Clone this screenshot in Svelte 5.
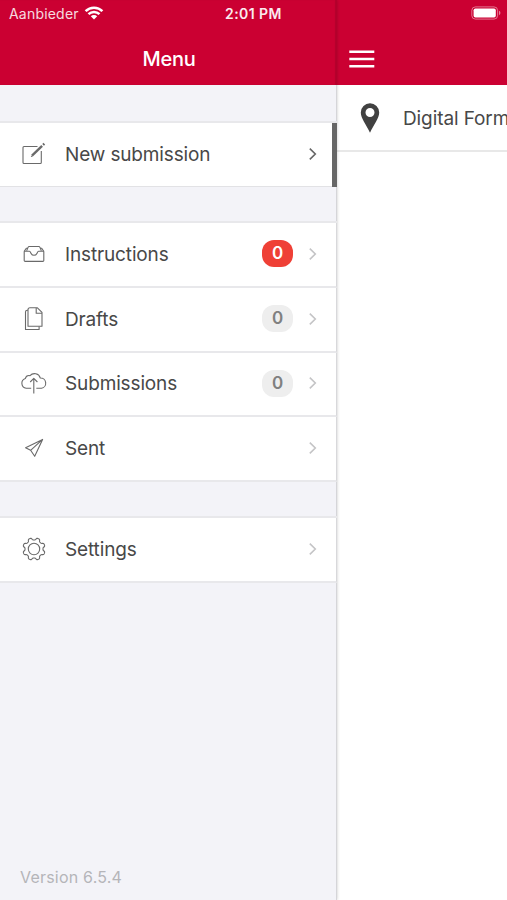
<script lang="ts">
  type Item = { icon: string; label: string; count?: number; alert?: boolean; active?: boolean };

  const groups: Item[][] = [
    [{ icon: 'compose', label: 'New submission', active: true }],
    [
      { icon: 'inbox', label: 'Instructions', count: 0, alert: true },
      { icon: 'drafts', label: 'Drafts', count: 0 },
      { icon: 'cloud', label: 'Submissions', count: 0 },
      { icon: 'plane', label: 'Sent' }
    ],
    [{ icon: 'gear', label: 'Settings' }]
  ];

  // Eight rounded teeth around the centre of a 28px box
  function gearPath() {
    const points: string[] = [];
    for (let i = 0; i < 160; i++) {
      const a = (i / 160) * Math.PI * 2;
      const wave = Math.tanh(-2 * Math.cos(8 * a)) / Math.tanh(2);
      const r = 10.1 + 1.1 * wave;
      points.push(`${(14 + r * Math.cos(a)).toFixed(2)} ${(14 + r * Math.sin(a)).toFixed(2)}`);
    }
    return `M${points.join('L')}Z`;
  }
</script>

<div class="app">
  <div class="status">
    <span class="carrier">Aanbieder</span>
    <svg class="wifi" width="20" height="14" viewBox="0 0 20 14">
      <path d="M1.6 5.1a12 12 0 0 1 16.8 0M4.5 8.2a7.9 7.9 0 0 1 11 0" />
      <path class="dot" d="M10 13.4 6.8 10.2a4.6 4.6 0 0 1 6.4 0Z" />
    </svg>
    <span class="time">2:01 PM</span>
    <svg class="battery" width="30" height="14" viewBox="0 0 30 14">
      <rect class="case" x="0.8" y="0.9" width="25.8" height="12.2" rx="3.6" />
      <rect class="charge" x="2.6" y="2.5" width="22.2" height="9" rx="1.8" />
      <path class="nub" d="M28 4.8a2.4 2.4 0 0 1 0 4.4Z" />
    </svg>
  </div>

  <aside class="menu">
    <header class="bar title">Menu</header>
    <nav>
      {#each groups as group}
        <ul class="group">
          {#each group as item}
            <li class="row" class:active={item.active}>
              <svg class="icon" width="28" height="28" viewBox="0 0 28 28">
                {#if item.icon === 'compose'}
                  <path d="M17.5 6.5H4a1 1 0 0 0-1 1v15a1 1 0 0 0 1 1h16.3a1 1 0 0 0 1-1V11" />
                  <path class="pencil" d="M12 15.6 22.1 5.9" />
                  <path class="pencil" d="M23.1 4.9l1.2-1.2" />
                  <path d="M11 16.6l1.5-.6" />
                {:else if item.icon === 'inbox'}
                  <path d="M4.2 11.3 6.3 8.2H8M23.8 11.3l-2.1-3.1H20M4.2 11.3v9.2a.9.9 0 0 0 .9.9h17.8a.9.9 0 0 0 .9-.9v-9.2h-5.2c-.8 0-1 .7-1.4 1.7-.6 1.6-1.5 2.3-3.2 2.3s-2.6-.7-3.2-2.3c-.4-1-.6-1.7-1.4-1.7Z" />
                  <path d="M6.6 10.8 8.2 7.1a1 1 0 0 1 .9-.6h9.8a1 1 0 0 1 .9.6l1.6 3.7" />
                {:else if item.icon === 'drafts'}
                  <path d="M10 2.8h7.4l4.6 4.5v13.9H8V4.8a2 2 0 0 1 2-2Z" />
                  <path d="M16.2 3v5.3H22M8 5.2H7.3a1.8 1.8 0 0 0-1.8 1.8v17.5h13.6v-3" />
                {:else if item.icon === 'cloud'}
                  <path d="M11.2 19.3H6.2a5 5 0 0 1-.9-9.7A4 4 0 0 1 10 6.7 6 6 0 0 1 20.3 9 5.2 5.2 0 0 1 21.5 19.3H16.3" />
                  <path d="M13.8 24.5V9.5M10.2 13l3.6-3.6 3.6 3.6" />
                {:else if item.icon === 'plane'}
                  <path d="M22.6 5.4 5.6 13.7l5 2.6 4.1 6ZM22.6 5.4l-12 10.9" />
                {:else}
                  <path d={gearPath()} />
                  <circle cx="14" cy="14" r="5.7" />
                {/if}
              </svg>
              <span class="label">{item.label}</span>
              {#if item.count !== undefined}
                <span class="badge" class:alert={item.alert}>{item.count}</span>
              {/if}
              <svg class="chevron" width="10" height="14" viewBox="0 0 10 14">
                <path d="M1.8 1.6 7.3 7l-5.5 5.4" />
              </svg>
            </li>
          {/each}
        </ul>
      {/each}
    </nav>
    <footer>Version 6.5.4</footer>
  </aside>

  <main>
    <header class="bar">
      <svg class="burger" width="26" height="18" viewBox="0 0 26 18">
        <path d="M0.3 1.7h25M0.3 9h25M0.3 16.3h25" />
      </svg>
    </header>
    <div class="form">
      <svg class="pin" width="20" height="30" viewBox="0 0 20 30">
        <path fill-rule="evenodd" d="M10 .3A9.2 9.2 0 0 0 .8 9.5C.8 15.5 6.2 21.5 10 29.7 13.8 21.5 19.2 15.5 19.2 9.5A9.2 9.2 0 0 0 10 .3Zm0 4.7a4.5 4.5 0 1 1 0 9 4.5 4.5 0 0 1 0-9Z" />
      </svg>
      <span class="name">Digital Form</span>
    </div>
  </main>
</div>

<style>
  :global(body) {
    margin: 0;
  }

  .app {
    position: relative;
    display: flex;
    width: 507px;
    height: 900px;
    overflow: hidden;
    background: #fff;
    color: #484848;
    font-family: Inter, 'Liberation Sans', sans-serif;
    font-size: 19px;
  }

  .status {
    position: absolute;
    z-index: 2;
    inset: 0 0 auto;
    display: grid;
    grid-template-columns: auto 20px 1fr 30px;
    align-items: center;
    height: 27px;
    padding: 0 6px 0 9px;
    box-sizing: border-box;
    color: #fff;
    font-size: 14px;
  }

  .carrier {
    width: 75px;
    letter-spacing: 0.2px;
    opacity: 0.85;
  }

  .time {
    width: 62px;
    margin-left: 121px;
    font-size: 14px;
    font-weight: 600;
    letter-spacing: 0.45px;
    white-space: nowrap;
    opacity: 0.92;
  }

  .wifi {
    margin-top: -1px;
  }

  .wifi path {
    fill: none;
    stroke: #fff;
    stroke-width: 2.5;
  }

  .wifi .dot {
    fill: #fff;
    stroke: none;
  }

  .battery {
    margin-top: -1px;
  }

  .case {
    fill: none;
    stroke: #fff;
    stroke-opacity: 0.45;
  }

  .charge {
    fill: #fff;
  }

  .nub {
    fill: #fff;
    opacity: 0.5;
  }

  .menu {
    position: relative;
    z-index: 1;
    display: flex;
    flex-direction: column;
    width: 337px;
    flex: none;
    box-sizing: border-box;
    background: #f3f3f8;
    box-shadow: inset -1px 0 0 rgba(0, 0, 0, 0.12), 0 0 3px rgba(0, 0, 0, 0.22);
  }

  .bar {
    display: flex;
    align-items: center;
    height: 85px;
    padding-top: 32px;
    box-sizing: border-box;
    background: #cb0032;
    color: #fff;
  }

  .title {
    justify-content: center;
    padding-left: 1px;
    font-size: 20px;
    font-weight: 500;
    letter-spacing: -0.3px;
    box-shadow: inset -2px 0 1px rgba(0, 0, 0, 0.12);
  }

  nav {
    display: flex;
    flex: 1;
    flex-direction: column;
    gap: 34px;
    padding-top: 36px;
  }

  .group {
    margin: 0;
    padding: 0;
    list-style: none;
    border-top: 2px solid #e8e8eb;
  }

  .row {
    display: flex;
    align-items: center;
    height: 64.75px;
    padding: 0 18px 1px 20px;
    box-sizing: border-box;
    border-bottom: 2px solid #e8e8eb;
    border-right: 1px solid #d8d8db;
    background: #fff;
  }

  .row.active {
    height: 64px;
    padding-right: 14px;
    padding-bottom: 2px;
    border-right: 5px solid #666;
    border-bottom: 0;
    box-shadow: inset 0 -1px 0 #e2e2e5;
  }

  .icon {
    flex: none;
    margin-right: 17px;
    fill: none;
    stroke: #6a6a6a;
    stroke-width: 1.1;
    stroke-linejoin: round;
  }

  .pencil {
    stroke-width: 2.4;
  }

  .label {
    flex: 1;
    padding-top: 1px;
    letter-spacing: -0.14px;
  }

  .badge {
    width: 31px;
    height: 27px;
    margin-right: 15px;
    border-radius: 12px;
    background: #eee;
    color: #808080;
    font-size: 17px;
    font-weight: 600;
    line-height: 27px;
    text-align: center;
  }

  .badge.alert {
    background: #ef4036;
    color: #fff;
  }

  .chevron {
    fill: none;
    stroke: #c4c4c6;
    stroke-width: 1.6;
  }

  .active .chevron {
    stroke: #666;
  }

  footer {
    padding: 0 20px 13px;
    color: #b5b5b9;
    font-size: 16px;
    letter-spacing: 0.2px;
  }

  main {
    flex: 1;
    min-width: 0;
  }

  .burger {
    margin-left: 12px;
    stroke: #fff;
    stroke-width: 2.4;
  }

  .form {
    display: flex;
    align-items: center;
    height: 67px;
    padding-left: 23px;
    box-sizing: border-box;
    border-bottom: 2px solid #e8e8e8;
    white-space: nowrap;
  }

  .pin {
    flex: none;
    margin-right: 23px;
    fill: #414141;
  }

  .name {
    padding-top: 2px;
    letter-spacing: -0.1px;
  }
</style>
